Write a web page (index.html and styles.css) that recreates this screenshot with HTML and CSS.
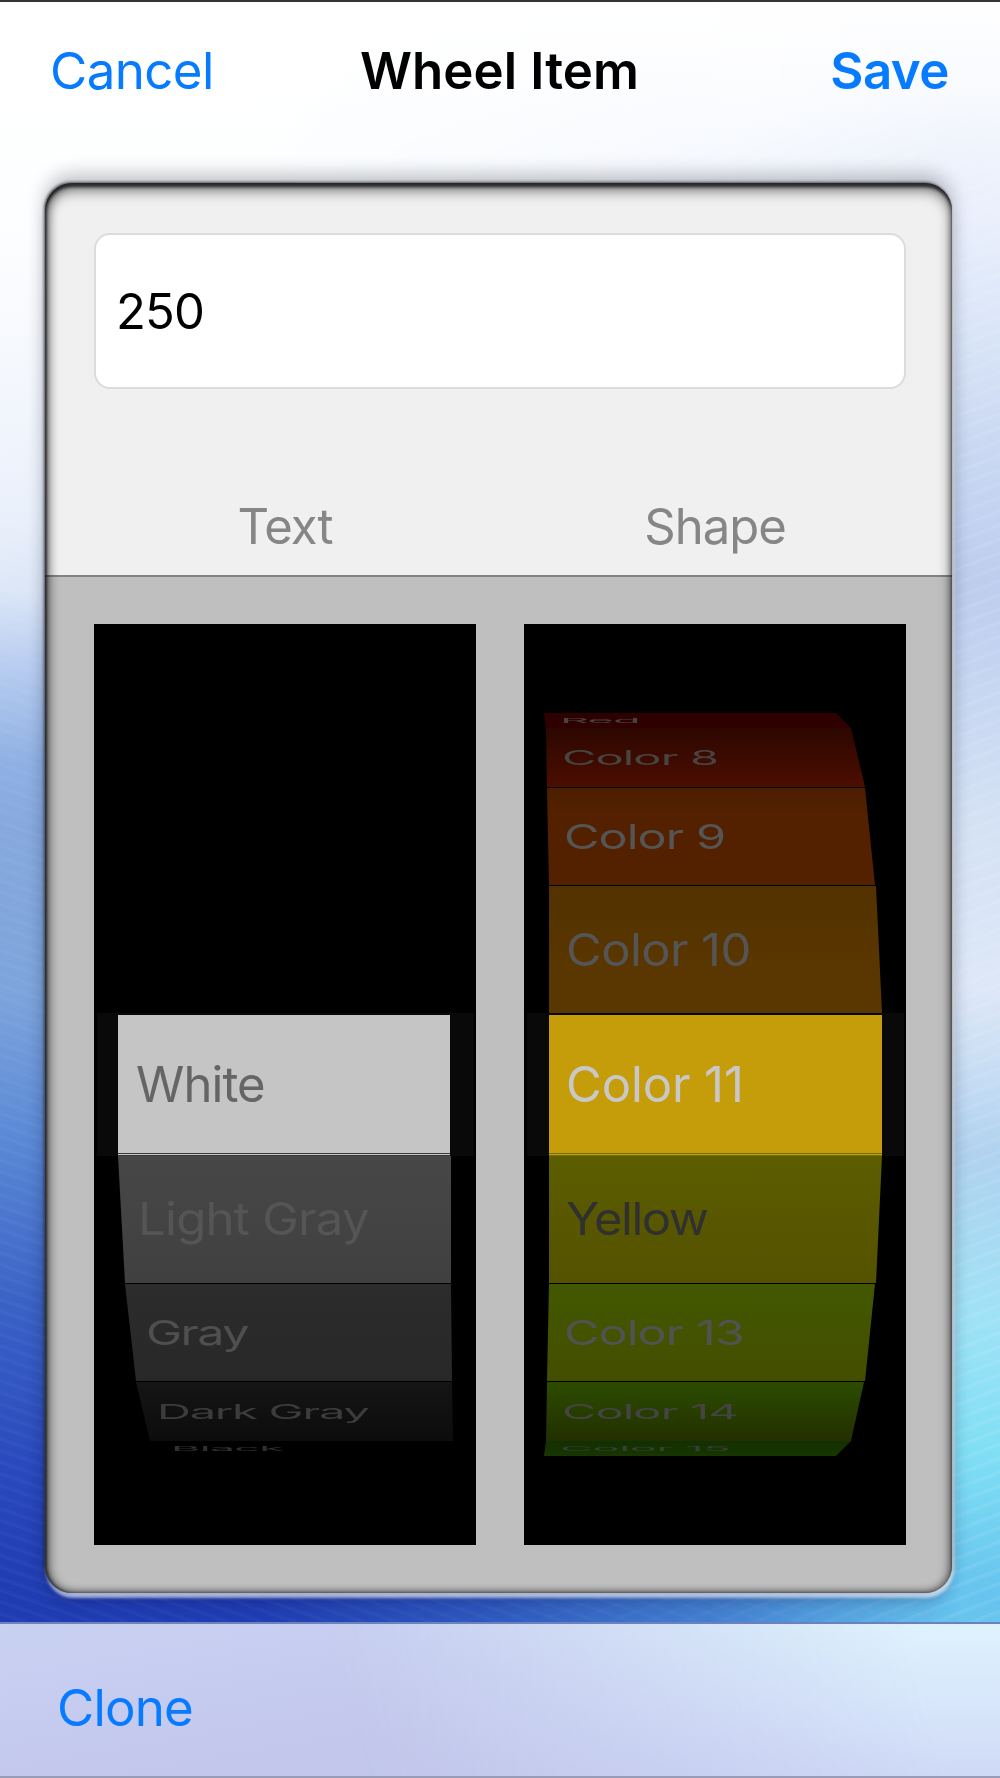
FILE: index.html
```
<!DOCTYPE html>
<html lang="en">
<head>
    <meta charset="UTF-8">
    <meta name="viewport" content="width=device-width, initial-scale=1.0">
    <title>Wheel Item</title>
    <link rel="stylesheet" href="styles.css">
</head>
<body>
    <div class="screen">
        <header class="navbar">
            <a class="nav-link cancel">Cancel</a>
            <h1 class="title">Wheel Item</h1>
            <a class="nav-link save">Save</a>
        </header>

        <main class="panel">
            <section class="form">
                <div class="field">250</div>
                <div class="labels">
                    <span>Text</span>
                    <span>Shape</span>
                </div>
            </section>
            <section class="pickers">
                <div class="picker text-picker">
                    <div class="row far-top"></div>
                    <div class="row top-3"></div>
                    <div class="row top-2"></div>
                    <div class="row top-1"></div>
                    <div class="row selected white"><span>White</span></div>
                    <div class="row low-1 light-gray"><span>Light Gray</span></div>
                    <div class="row low-2 gray"><span>Gray</span></div>
                    <div class="row low-3 dark-gray"><span>Dark Gray</span></div>
                    <div class="row far-low black"><span>Black</span></div>
                </div>
                <div class="picker shape-picker">
                    <div class="row far-top red"><span>Red</span></div>
                    <div class="row top-3 color-8"><span>Color 8</span></div>
                    <div class="row top-2 color-9"><span>Color 9</span></div>
                    <div class="row top-1 color-10"><span>Color 10</span></div>
                    <div class="row selected color-11"><span>Color 11</span></div>
                    <div class="row low-1 yellow"><span>Yellow</span></div>
                    <div class="row low-2 color-13"><span>Color 13</span></div>
                    <div class="row low-3 color-14"><span>Color 14</span></div>
                    <div class="row far-low color-15"><span>Color 15</span></div>
                </div>
            </section>
        </main>

        <footer class="toolbar">
            <a class="nav-link clone">Clone</a>
        </footer>
    </div>
</body>
</html>
```
FILE: styles.css
```
* {
    box-sizing: border-box;
}

body {
    margin: 0;
    font-family: Inter, "Liberation Sans", sans-serif;
    font-size: 49px;
}

/* wallpaper */
.screen {
    position: relative;
    z-index: 0;
    display: flex;
    flex-direction: column;
    width: 1000px;
    height: 1778px;
    overflow: hidden;
    border-top: 2px solid #383436;
    background:
        repeating-linear-gradient(19deg, rgba(255,255,255,0.03) 0 2px, rgba(255,255,255,0) 5px 11px),
        linear-gradient(to bottom, #fff 0, #fdfeff 220px, #f4f7fd 380px, #e9f0fb 520px, #dbe6f7 590px, #b8cdf0 663px, #8fb0e3 760px, #86a8de 826px, #7da4dc 989px, #5c8ad6 1130px, #3a62c6 1300px, #294abe 1460px, #1f3cb2 1600px);
}

.screen::before {
    content: "";
    position: absolute;
    inset: 0;
    z-index: -1;
    background:
        repeating-linear-gradient(159deg, rgba(255,255,255,0.08) 0 2px, rgba(255,255,255,0) 5px 13px),
        linear-gradient(to bottom, #fff 0, #f8fafe 90px, #eef3fc 150px, #e9effc 220px, #dbe6f8 320px, #cbd9f2 430px, #bccdee 581px, #d5e2f5 826px, #dde7f7 989px, #b0d2f0 1152px, #9fe2f6 1315px, #80dff5 1450px, #66c4ee 1590px);
    -webkit-mask-image: linear-gradient(to right, transparent 25%, rgba(0,0,0,0.22) 50%, rgba(0,0,0,0.5) 72%, #000 96%);
    mask-image: linear-gradient(to right, transparent 25%, rgba(0,0,0,0.22) 50%, rgba(0,0,0,0.5) 72%, #000 96%);
}

.navbar {
    display: grid;
    grid-template-columns: 1fr auto 1fr;
    align-items: center;
    height: 136px;
    margin-bottom: 45px;
    padding: 0 51px 0 50px;
    font-size: 51px;
}

.nav-link {
    color: #067bff;
    text-decoration: none;
}

.cancel {
    letter-spacing: -0.6px;
}

.title {
    margin: 0;
    font-size: 51px;
    font-weight: 600;
    letter-spacing: 0.1px;
}

.save {
    justify-self: end;
    font-weight: 600;
    letter-spacing: -0.5px;
}

.panel {
    position: relative;
    width: 907px;
    height: 1410px;
    margin-left: 45px;
    border-radius: 27px;
    box-shadow:
        0 -9px 18px rgba(20,25,35,0.26),
        -1px -1px 3px rgba(0,0,20,0.6),
        2px 1px 4px rgba(255,255,255,0.6),
        1px 5px 3px rgba(225,230,250,0.65),
        0 12px 16px -4px rgba(0,0,50,0.25);
}

/* bevel over the panel edge */
.panel::after {
    content: "";
    position: absolute;
    inset: 0;
    border-radius: 27px;
    box-shadow:
        inset 0 4px 3px rgba(30,32,35,0.85),
        inset 0 7px 14px rgba(0,0,0,0.55),
        inset 2px 0 3px rgba(0,0,0,0.5),
        inset 4px 0 10px rgba(0,0,0,0.35),
        inset -2px -2px 6px rgba(0,0,0,0.25);
}

.form {
    height: 394px;
    padding: 50px 46px 0 49px;
    border-bottom: 2px solid #828282;
    border-radius: 27px 27px 0 0;
    background: #f0f0f0;
}

.field {
    display: flex;
    align-items: center;
    height: 156px;
    padding-left: 20px;
    border: 2px solid #dcdcdc;
    border-radius: 16px;
    background: #fff;
    color: #000;
    letter-spacing: -0.8px;
}

.labels {
    display: grid;
    grid-template-columns: 382px 382px;
    gap: 48px;
    margin-top: 108px;
    color: #868686;
    letter-spacing: -1px;
    line-height: 60px;
    text-align: center;
}

.pickers {
    display: flex;
    gap: 48px;
    height: 1016px;
    padding: 47px 46px 48px 49px;
    border-radius: 0 0 27px 27px;
    background: #bfbfbf;
}

/* the band at 389px marks the selected row */
.picker {
    display: flex;
    flex-direction: column;
    width: 382px;
    height: 921px;
    padding-top: 89px;
    background: linear-gradient(#090909, #090909) 3px 389px / 377px 143px no-repeat #000;
}

.row {
    display: flex;
    flex: none;
    align-items: center;
    padding-left: 42px;
    overflow: hidden;
    color: #555;
    letter-spacing: -0.9px;
    white-space: nowrap;
    line-height: 60px;
}

.row span {
    flex: none;
    transform-origin: left center;
}

.far-top,
.far-low {
    height: 15px;
}

.top-3,
.low-3 {
    height: 59px;
}

.top-2,
.low-2 {
    height: 97px;
    margin-top: 1px;
}

.top-1,
.low-1 {
    height: 127px;
    margin-top: 1px;
}

.low-1 {
    margin-top: 0;
}

.low-3 {
    margin-top: 1px;
}

.selected {
    height: 141px;
    margin-top: 2px;
    padding-top: 2px;
    border-bottom: 3px double #3b3b3b;
}

.top-1 span,
.low-1 span {
    transform: scale(1, 0.91);
}

.top-1 span {
    position: relative;
    top: 1px;
}

.top-2 span,
.low-2 span {
    transform: scale(0.99, 0.7);
}

.top-3 span,
.low-3 span {
    transform: scale(0.96, 0.41);
}

.far-top span,
.far-low span {
    transform: scale(0.92, 0.14);
}

/* text colours */
.white {
    background: #c5c5c5;
    color: #656565;
    clip-path: polygon(24px 0, 356px 0, 356px 100%, 24px 100%);
}

.light-gray {
    padding-left: 44px;
    background: linear-gradient(#474747, #404040);
    color: #555;
    letter-spacing: -0.7px;
    clip-path: polygon(24px 0, 357px 0, 357px 100%, 31px 100%);
}

.gray {
    padding-left: 52px;
    background: linear-gradient(#2c2c2c, #282828);
    color: #4f4f4f;
    letter-spacing: -1.6px;
    clip-path: polygon(31px 0, 357px 0, 358px 100%, 42px 100%);
}

.dark-gray {
    padding-left: 63px;
    background: linear-gradient(#151515, #0c0c0c);
    color: #3c3c3c;
    letter-spacing: -1.3px;
    clip-path: polygon(42px 0, 358px 0, 359px 100%, 56px 100%);
}

.black {
    padding-left: 77px;
    color: #303030;
}

/* shape colours */
.red {
    padding-left: 36px;
    background: #2f0000;
    color: #444;
    clip-path: polygon(20px 0, 312px 0, 327px 100%, 22px 100%);
}

.color-8 {
    padding-left: 38px;
    background: linear-gradient(#2c0700, #4c0e00);
    color: #484442;
    clip-path: polygon(22px 0, 327px 0, 341px 100%, 23px 100%);
}

.color-9 {
    padding-left: 40px;
    background: linear-gradient(#4b1e00, #542100 30%);
    clip-path: polygon(23px 0, 341px 0, 351px 100%, 25px 100%);
}

.color-10 {
    background: linear-gradient(#523200, #5a3600 60%);
    letter-spacing: -0.6px;
    clip-path: polygon(25px 0, 352px 0, 358px 100%, 25px 100%);
}

.color-11 {
    border-bottom-color: #75700a;
    background: #c59d0a;
    color: #c8c8c8;
    letter-spacing: -0.1px;
    clip-path: polygon(25px 0, 358px 0, 358px 100%, 25px 100%);
}

.yellow {
    background: linear-gradient(#5c5d00, #555200);
    color: #303030;
    letter-spacing: -1.5px;
    clip-path: polygon(25px 0, 358px 0, 352px 100%, 25px 100%);
}

.color-13 {
    padding-left: 40px;
    background: linear-gradient(#435800, #444e00);
    color: #525252;
    clip-path: polygon(25px 0, 351px 0, 341px 100%, 23px 100%);
}

.color-14 {
    padding-left: 38px;
    background: linear-gradient(#2c4c00, #222f00);
    color: #444;
    clip-path: polygon(23px 0, 340px 0, 327px 100%, 22px 100%);
}

.color-15 {
    padding-left: 36px;
    background: linear-gradient(#123000, #183600);
    color: #3b3b3b;
    letter-spacing: -0.4px;
    clip-path: polygon(22px 0, 327px 0, 312px 100%, 20px 100%);
}

.toolbar {
    position: relative;
    display: flex;
    align-items: center;
    height: 156px;
    margin-top: 29px;
    padding: 15px 57px 0;
    border-top: 2px solid rgba(50,85,160,0.6);
    border-bottom: 2px solid #989cb8;
    background: linear-gradient(170deg, #c9d1f3 0%, #c3c8ec 50%, #bfc3ea 100%);
    font-size: 51px;
}

.toolbar::before {
    content: "";
    position: absolute;
    inset: 0;
    z-index: 0;
    background: linear-gradient(to bottom, #def2fd 0%, #d8e7fb 50%, #cfdaf6 100%);
    -webkit-mask-image: linear-gradient(75deg, transparent 35%, #000 92%);
    mask-image: linear-gradient(75deg, transparent 35%, #000 92%);
}

.clone {
    position: relative;
    letter-spacing: -0.8px;
}
```
